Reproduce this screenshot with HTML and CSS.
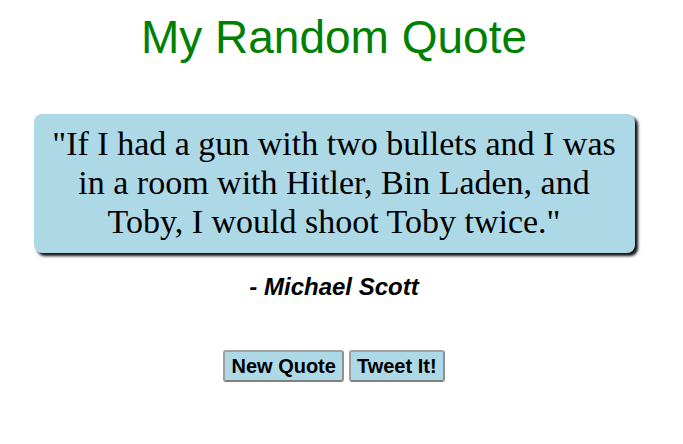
FILE: index.html
```html
<!DOCTYPE html>
<html>
<head>
<meta charset="utf-8">
<link rel="stylesheet" href="styles.css">
</head>
<body>
<div class="page">
  <h1 class="title">My Random Quote</h1>
  <div class="quote-box">
    <p class="quote-text">"If I had a gun with two bullets and I was in a room with Hitler, Bin Laden, and Toby, I would shoot Toby twice."</p>
  </div>
  <p class="author">- Michael Scott</p>
  <div class="actions">
    <button class="btn">New Quote</button>
    <button class="btn">Tweet It!</button>
  </div>
</div>
</body>
</html>
```
FILE: styles.css
```css
html, body {
  margin: 0;
  padding: 0;
  background: #fff;
}
.page {
  width: 668px;
  display: flex;
  flex-direction: column;
  align-items: center;
  font-family: "Liberation Sans", Arial, sans-serif;
}
.title {
  margin: 10px 0 0;
  font-weight: normal;
  font-size: 46px;
  line-height: 54px;
  color: #008000;
}
.quote-box {
  margin-top: 50px;
  width: 601px;
  box-sizing: border-box;
  padding: 10px 12px 12px;
  background: #add8e6;
  border-radius: 8px;
  box-shadow: 3px 3px 3px #111;
}
.quote-text {
  margin: 0;
  font-family: "Liberation Serif", "Times New Roman", serif;
  font-size: 34px;
  line-height: 39px;
  text-align: center;
  color: #000;
}
.author {
  margin: 20px 0 0;
  font-size: 24px;
  line-height: 28px;
  font-weight: bold;
  font-style: italic;
  color: #000;
}
.actions {
  margin-top: 49px;
  display: flex;
  gap: 5px;
}
.btn {
  font-family: "Liberation Sans", Arial, sans-serif;
  font-size: 20px;
  font-weight: bold;
  background: #add8e6;
  color: #000;
  border: 2px solid #a0a0a0;
  border-bottom-color: #808080;
  border-right-color: #909090;
  border-radius: 3px;
  padding: 3px 6px;
  line-height: 22px;
}
```
